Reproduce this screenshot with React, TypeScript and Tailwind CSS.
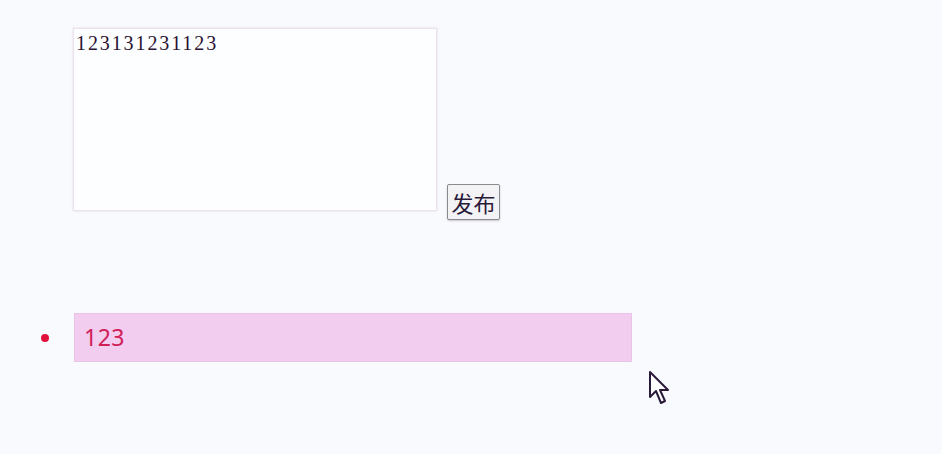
import { useState } from 'react';

const Cursor = () => (
  <svg width="22" height="36" viewBox="0 0 22 36" className="absolute left-[648px] top-[370px]">
    <path
      d="M2 2 L2 27 L8 21 L13 33 L17 31 L12 20 L20 20 Z"
      fill="#ffffff"
      stroke="#2a1a3a"
      strokeWidth="2"
      strokeLinejoin="round"
    />
  </svg>
);

const App = () => {
  const [text, setText] = useState('123131231123');
  const items = ['123'];

  return (
    <div className="relative w-[942px] h-[454px] bg-[#f9fafe] overflow-hidden">
      <div className="flex items-end gap-[10px] pl-[73px] pt-[28px]">
        <textarea
          value={text}
          onChange={(event) => setText(event.target.value)}
          className="w-[364px] h-[183px] bg-[#fdfeff] border border-[#ebe2eb] px-[2px] pt-[2px] text-[20px] leading-[24px] text-[#2a1232] resize-none outline-none shadow-[0_0_2px_rgba(200,190,200,0.5)]"
          style={{ fontFamily: '"Liberation Serif", "Noto Sans CJK SC", serif', letterSpacing: '1.9px' }}
        />
        <button
          className="w-[53px] h-[36px] mb-[-9px] bg-[#f3f3f5] border border-[#8a8a90] rounded-[2px] text-[22px] leading-none text-[#2a1a3a] shadow-[0_1px_2px_rgba(0,0,0,0.2)]"
          style={{ fontFamily: '"Noto Sans CJK SC", sans-serif' }}
        >
          发布
        </button>
      </div>

      <ul className="mt-[102px]">
        {items.map((item) => (
          <li key={item} className="flex items-center">
            <span className="ml-[41px] w-[8px] h-[8px] rounded-full bg-[#e0103c]" />
            <div
              className="ml-[25px] w-[558px] h-[49px] bg-[#f2cdf0] border border-[#e8c4e8] flex items-center pl-[9px] text-[23px] text-[#d02058]"
              style={{ fontFamily: '"Noto Sans", "Open Sans", sans-serif', letterSpacing: '0.5px' }}
            >
              {item}
            </div>
          </li>
        ))}
      </ul>

      <Cursor />
    </div>
  );
};

export default App;
